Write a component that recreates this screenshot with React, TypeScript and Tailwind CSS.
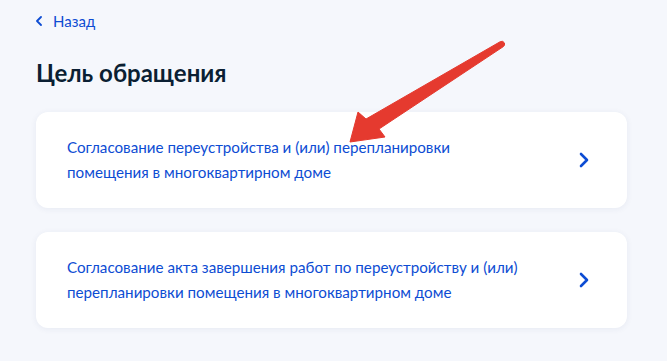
const options = [
  {
    lines: [
      "Согласование переустройства и (или) перепланировки",
      "помещения в многоквартирном доме",
    ],
  },
  {
    lines: [
      "Согласование акта завершения работ по переустройству и (или)",
      "перепланировки помещения в многоквартирном доме",
    ],
  },
];

const Chevron = ({ className }: { className?: string }) => (
  <svg className={className} width="10" height="16" viewBox="0 0 10 16" fill="none">
    <path d="M2 2 L8 8 L2 14" stroke="currentColor" strokeWidth="2.6" strokeLinecap="round" strokeLinejoin="round" />
  </svg>
);

export default function App() {
  return (
    <div
      className="relative w-[667px] h-[361px] overflow-hidden bg-[#f5f7fc]"
      style={{ fontFamily: "Lato, 'Noto Sans', sans-serif" }}
    >
      <div className="px-[36px] pt-[10px]">
        <a href="#" className="flex items-center gap-[11px] text-[15px] text-[#0d4cd3] leading-[22px]">
          <svg width="6" height="10" viewBox="0 0 6 10" fill="none">
            <path d="M5 1 L1 5 L5 9" stroke="currentColor" strokeWidth="1.8" strokeLinecap="round" strokeLinejoin="round" />
          </svg>
          <span>Назад</span>
        </a>
        <h1 className="mt-[26px] text-[24px] leading-[30px] font-bold text-[#0b1f33]">
          Цель обращения
        </h1>
        <div className="mt-[24px] flex flex-col gap-[24px] w-[591px]">
          {options.map((option) => (
            <div
              key={option.lines[0]}
              className="flex items-center h-[96px] rounded-[12px] bg-white pl-[31px] pr-[38px] shadow-[0_1px_6px_rgba(40,60,120,0.07)]"
            >
              <p className="flex-1 pr-[20px] text-[15.2px] leading-[25px] text-[#0d4cd3]">
                {option.lines[0]}
                <br />
                {option.lines[1]}
              </p>
              <Chevron className="text-[#0d4cd3]" />
            </div>
          ))}
        </div>
      </div>
      {/* red annotation arrow drawn over the screenshot */}
      <svg
        className="absolute left-0 top-0 pointer-events-none"
        width="667"
        height="361"
        viewBox="0 0 667 361"
      >
        <path
          d="M500.5 41.5 Q503 40.5 504.5 43 Q505 45.5 503.5 46.5 L379 129 L385 137 L350 142 L358 112 L366 119 Z"
          fill="#e53a2f"
          stroke="#e53a2f"
          strokeWidth="1"
          strokeLinejoin="round"
        />
      </svg>
    </div>
  );
}
